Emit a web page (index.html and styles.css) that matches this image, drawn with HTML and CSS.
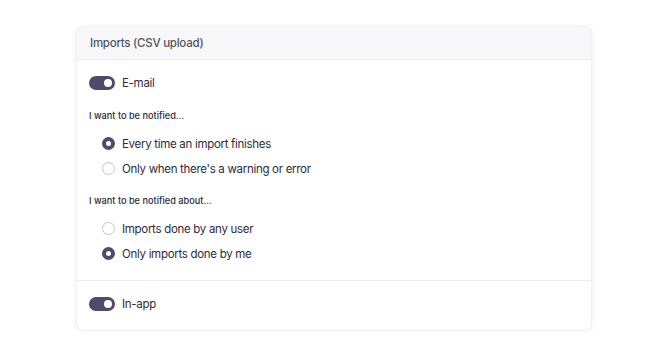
FILE: index.html
```html
<!DOCTYPE html>
<html lang="en">
  <head>
    <meta charset="UTF-8" />
    <meta name="viewport" content="width=device-width, initial-scale=1.0" />
    <title>Notification settings</title>
    <link rel="stylesheet" href="styles.css">
  </head>
  <body>
    <div class="page">
      <div class="card">
        <div class="card-header">Imports (CSV upload)</div>

        <div class="section">
          <label class="toggle-row">
            <span class="toggle on"><span class="knob"></span></span>
            E-mail
          </label>

          <p class="group-label">I want to be notified...</p>
          <div class="radio-list">
            <label class="radio-row">
              <span class="radio checked"></span>
              Every time an import finishes
            </label>
            <label class="radio-row">
              <span class="radio"></span>
              Only when there's a warning or error
            </label>
          </div>

          <p class="group-label second">I want to be notified about...</p>
          <div class="radio-list">
            <label class="radio-row">
              <span class="radio"></span>
              Imports done by any user
            </label>
            <label class="radio-row">
              <span class="radio checked"></span>
              Only imports done by me
            </label>
          </div>
        </div>

        <div class="section last">
          <label class="toggle-row">
            <span class="toggle on"><span class="knob"></span></span>
            In-app
          </label>
        </div>
      </div>
    </div>
  </body>
</html>
```

FILE: styles.css
```css
body {
  margin: 0;
  font-family: "Inter", "Noto Sans", sans-serif;
  background-color: #ffffff;
  color: #2e2b3b;
}
.page {
  padding: 26px 78px 0 76px;
}
.card {
  background-color: #fff;
  border: 1px solid #f1f1f4;
  border-radius: 8px;
  box-shadow: 0 1px 6px rgba(30, 25, 60, 0.07);
  overflow: hidden;
}
.card-header {
  height: 32px;
  line-height: 32px;
  padding: 0 13px;
  background-color: #f8f8fa;
  border-bottom: 1px solid #ececf0;
  font-size: 11.5px;
  letter-spacing: -0.25px;
  font-weight: 500;
  color: #56535f;
}
.section {
  padding: 13px 12px 14px;
}
.section.last {
  border-top: 1px solid #ececf0;
  padding-bottom: 16px;
}
.toggle-row {
  display: flex;
  align-items: center;
  gap: 7px;
  height: 20px;
  font-size: 11.5px;
  letter-spacing: -0.3px;
}
.toggle {
  position: relative;
  width: 26px;
  height: 14px;
  border-radius: 7px;
  background-color: #514a6c;
}
.toggle .knob {
  position: absolute;
  top: 3px;
  right: 3px;
  width: 8px;
  height: 8px;
  border-radius: 50%;
  background-color: #fff;
}
.group-label {
  margin: 15px 0 0;
  line-height: 16px;
  font-size: 9.2px;
  font-weight: 500;
}
.group-label.second {
  margin-top: 12px;
}
.radio-list {
  margin-top: 7px;
  padding-left: 13px;
}
.radio-row {
  display: flex;
  align-items: center;
  gap: 7px;
  height: 25px;
  font-size: 11.5px;
  letter-spacing: -0.3px;
}
.radio {
  box-sizing: border-box;
  width: 13px;
  height: 13px;
  border-radius: 50%;
  border: 1px solid #c6c5ce;
  background-color: #fff;
}
.radio.checked {
  border: 4.5px solid #514a6c;
}
```
